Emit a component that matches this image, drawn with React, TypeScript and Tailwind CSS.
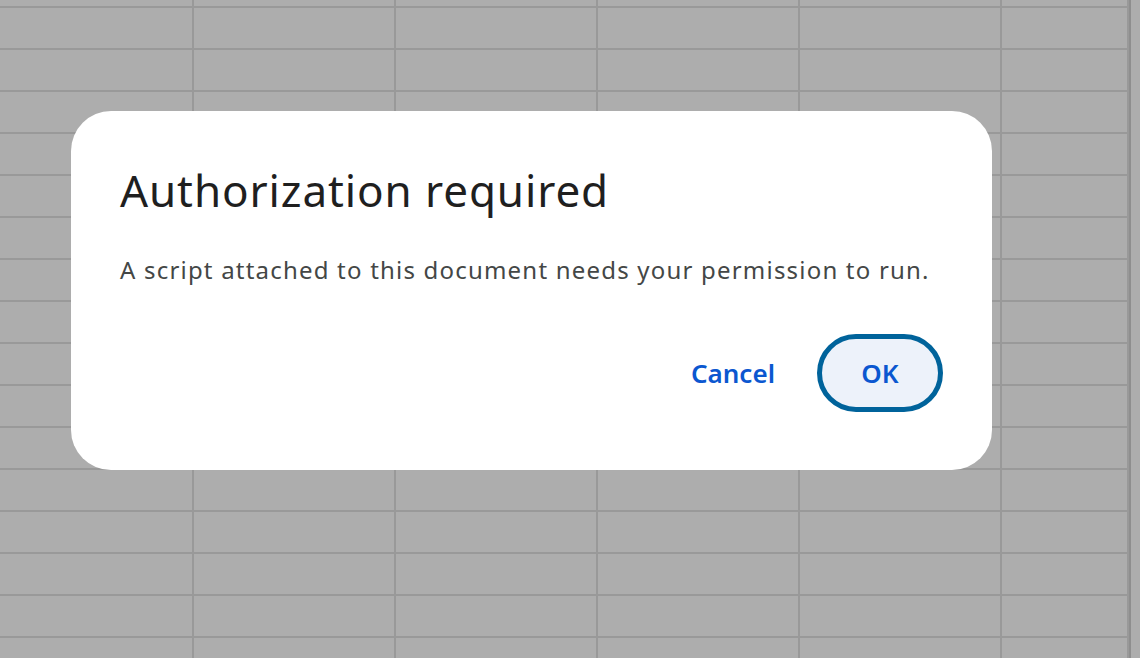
export default function App() {
  const rows = Array.from({ length: 17 });
  const cols = [202, 202, 202, 202, 202, 127];
  return (
    <div className="relative w-[1140px] h-[658px] overflow-hidden bg-[#adadad]">
      <div className="flex -ml-[8px] -mt-[34px]">
        {cols.map((w, i) => (
          <div key={i} className="flex flex-col border-r-2 border-[#999999]" style={{ width: w }}>
            {rows.map((_, j) => (
              <div key={j} className="h-[42px] border-b-2 border-[#999999]" />
            ))}
          </div>
        ))}
        <div className="w-[2px] bg-[#8e8e8e]" />
      </div>
      <div className="absolute left-[71px] top-[111px] w-[921px] h-[359px] bg-white rounded-[40px] px-[49px] pt-[54px] font-['Open_Sans']">
        <h1 className="text-[44px] leading-[50px] text-[#1f1f1f] tracking-[0.9px]">Authorization required</h1>
        <p className="mt-[39px] text-[24px] leading-[32px] text-[#444746] tracking-[1.2px]">
          A script attached to this document needs your permission to run.
        </p>
        <div className="mt-[48px] flex justify-end items-center gap-[42px]">
          <span className="text-[26px] font-semibold text-[#0b57d0]">Cancel</span>
          <div className="w-[126px] h-[78px] rounded-full border-[5px] border-[#00639b] bg-[#edf2fa] flex items-center justify-center text-[26px] font-semibold text-[#0b57d0]">OK</div>
        </div>
      </div>
    </div>
  );
}
